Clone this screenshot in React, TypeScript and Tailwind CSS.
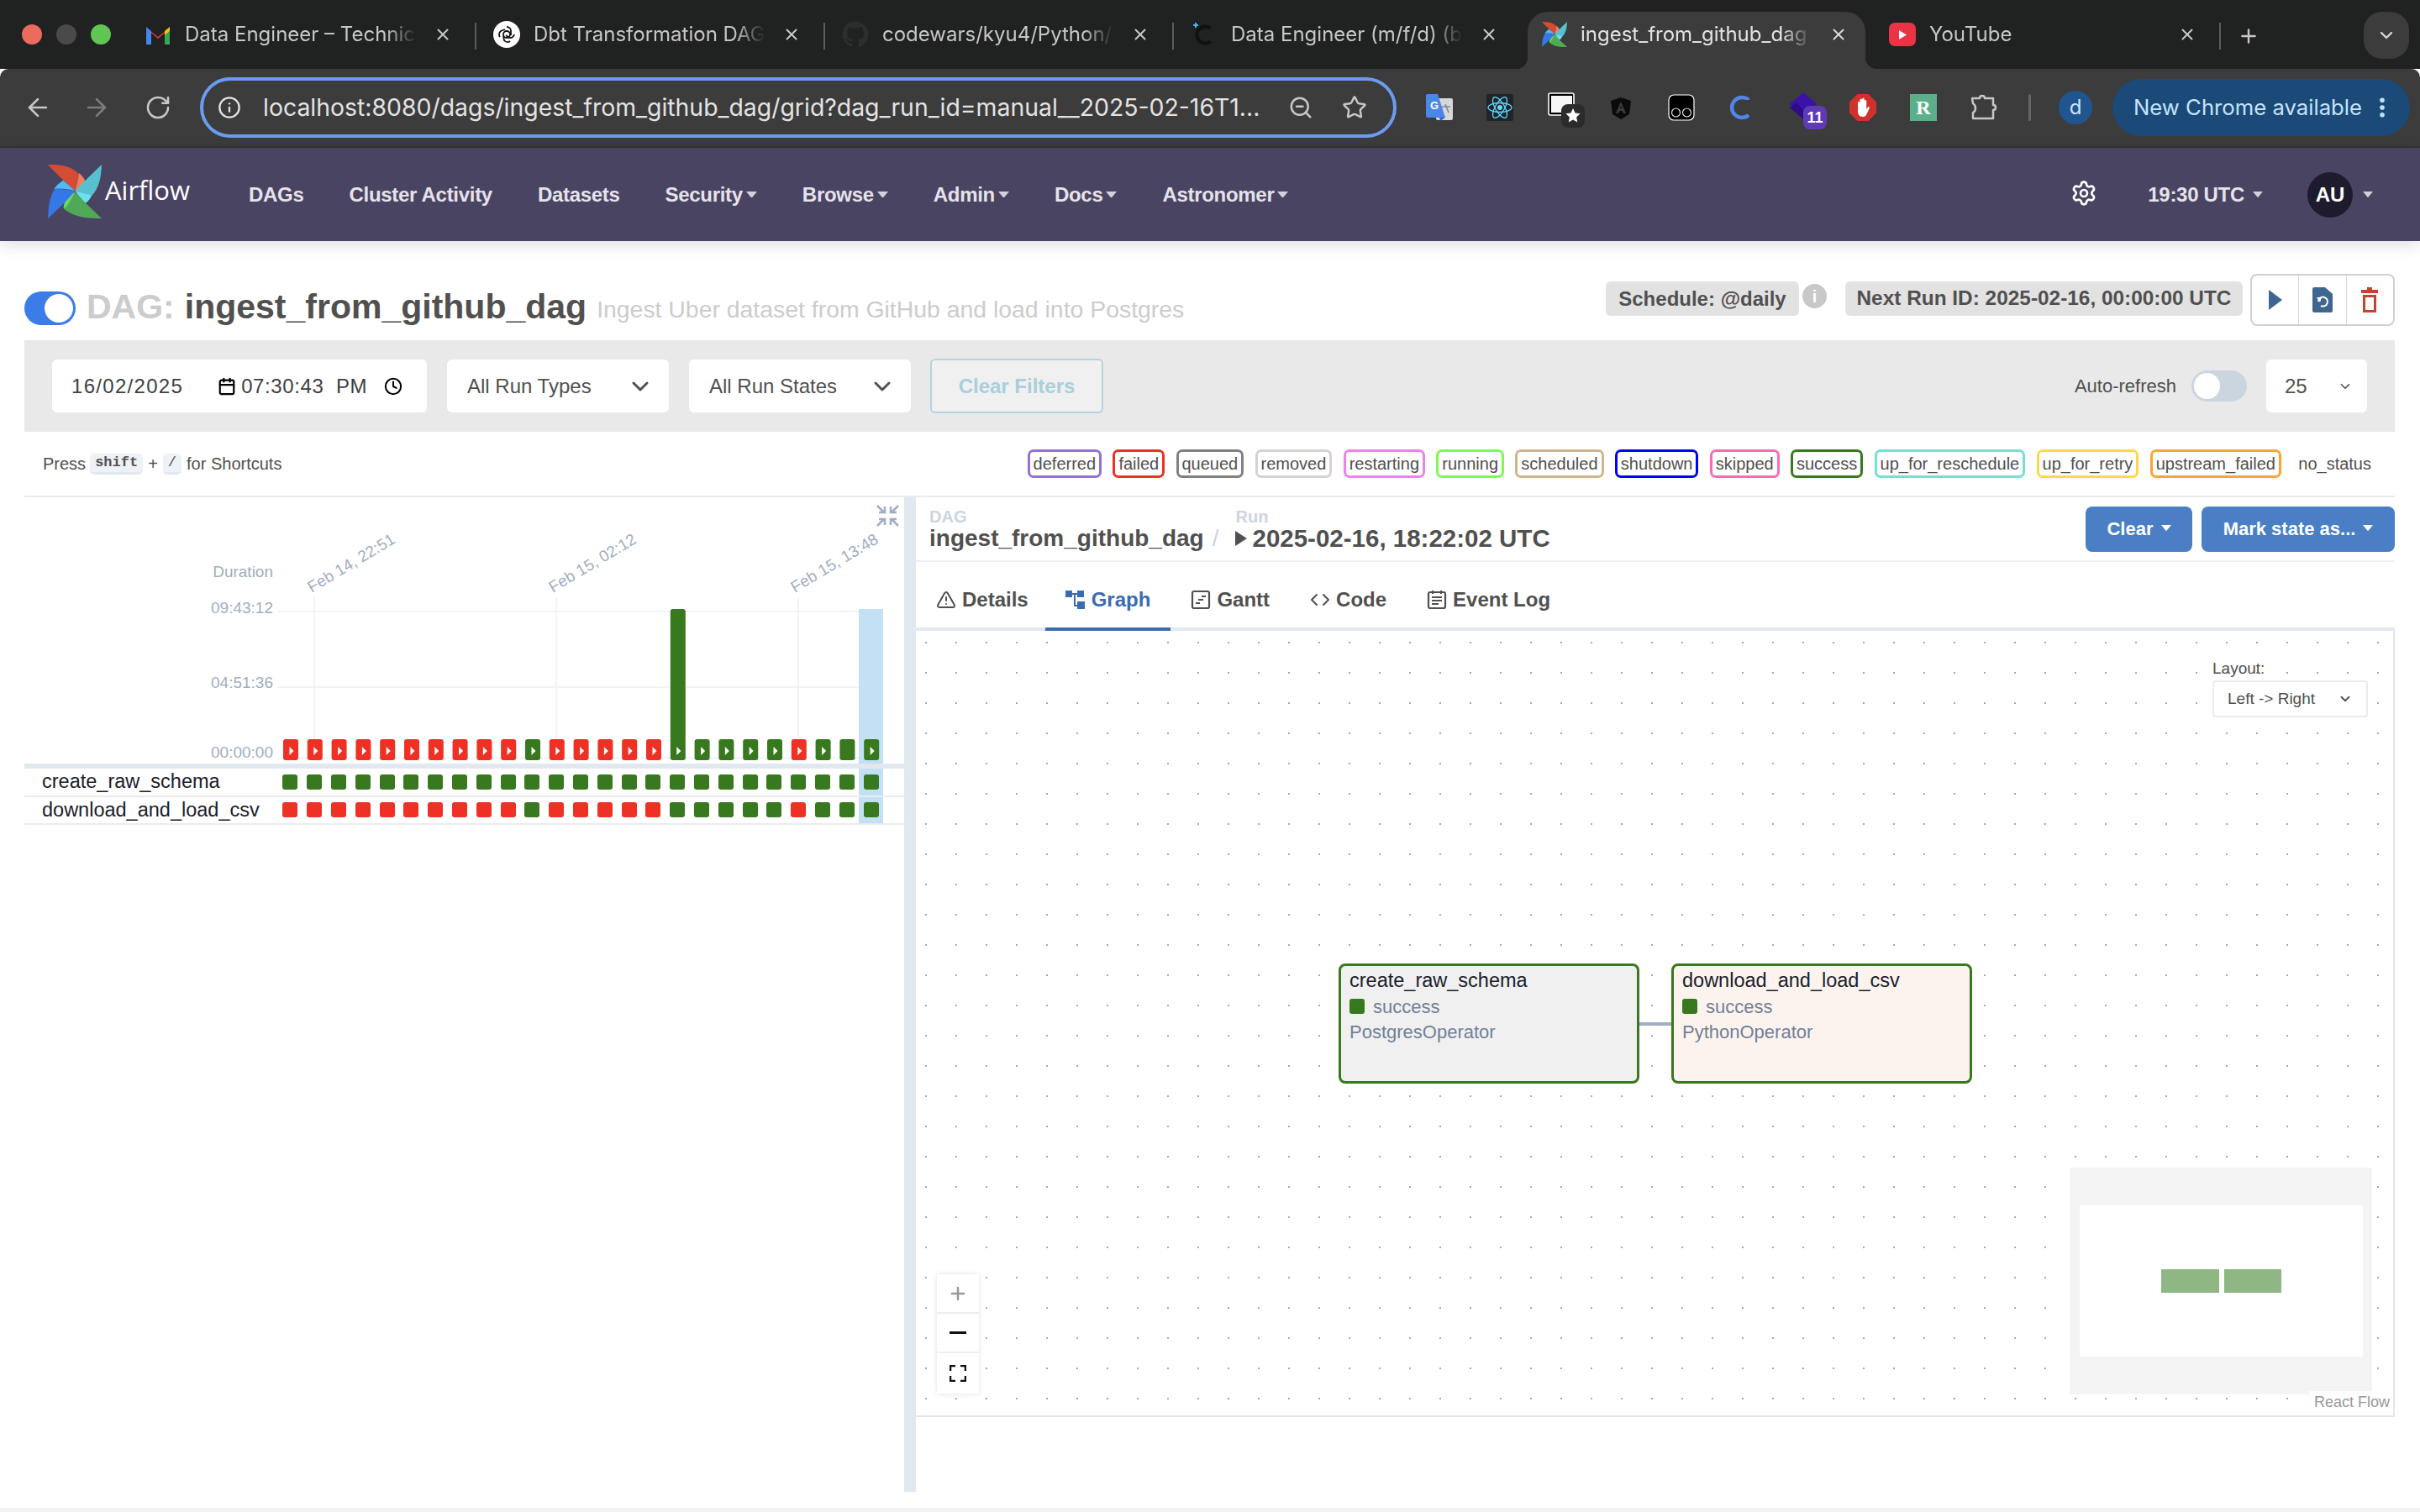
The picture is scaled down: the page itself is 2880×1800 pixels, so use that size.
import React from "react";
import { ArrowLeft, ArrowRight, RotateCw, Info, ZoomOut, Star, X, Plus, ChevronDown, EllipsisVertical, Settings, Calendar, Clock, TriangleAlert, Code } from "lucide-react";
import { FaGithub } from "react-icons/fa";

const Pinwheel = ({ size }: { size: number }) => (
  <svg viewBox="50 42 190 190" width={size} height={size} className="shrink-0">
    <path d="M50 42 C95 42 130 45 160 75 C155 100 150 120 146 135 C125 115 85 80 50 42Z" fill="#d34d34" />
    <path d="M160 72 C175 85 183 98 186 110 L146 135 C152 115 157 95 160 72Z" fill="#f08060" />
    <path d="M240 42 C238 90 230 125 205 152 L146 135 C175 105 205 75 240 42Z" fill="#57c1cf" />
    <path d="M146 135 L205 150 C198 165 192 172 182 178 C170 165 155 150 146 135Z" fill="#6be0ef" />
    <path d="M240 232 C190 232 140 228 106 198 L146 140 C175 170 205 200 240 232Z" fill="#4fa957" />
    <path d="M146 140 C125 145 108 165 105 195 C112 200 125 178 146 140Z" fill="#6bd66a" />
    <path d="M50 232 C52 185 58 150 76 126 L146 135 C118 170 85 200 50 232Z" fill="#3478e8" />
    <path d="M72 128 C85 110 95 105 104 98 C118 110 132 122 146 135 C120 128 95 125 72 128Z" fill="#4eb9fb" />
  </svg>
);

const Gmail = () => (
  <svg viewBox="0 0 32 28" width="32" height="28" className="shrink-0">
    <path d="M2 6 L16 17 L30 6 V24 H24 V12 L16 19 L8 12 V24 H2Z" fill="#ea4335" />
    <path d="M2 5 V26 H8 V10Z" fill="#4285f4" />
    <path d="M30 5 V26 H24 V10Z" fill="#34a853" />
    <path d="M24 10 L30 5 V10 L24 15Z" fill="#fbbc04" />
  </svg>
);

const Gpt = () => (
  <div className="w-[32px] h-[32px] rounded-full bg-white flex items-center justify-center shrink-0">
    <svg viewBox="0 0 24 24" width="24" height="24" fill="none" stroke="#111" strokeWidth="1.8">
      <circle cx="12" cy="12" r="4" />
      <path d="M12 3a5 5 0 0 1 5 5v5M21 12a5 5 0 0 1-6 4l-4-3M16 20a5 5 0 0 1-7-1l-1-5M4 15a5 5 0 0 1 1-7l5-2" />
    </svg>
  </div>
);

const Tab = ({ icon, title, sep = true }: { icon: React.ReactNode; title: string; sep?: boolean }) => (
  <>
    <div className="w-[413px] h-[68px] flex items-center pl-[20px] pb-[14px] shrink-0">
      <div className="w-[32px] flex justify-center shrink-0">{icon}</div>
      <div className="ml-[16px] w-[284px] whitespace-nowrap text-[24px] text-[#c7c7c7] [mask-image:linear-gradient(to_right,black_84%,transparent_97%)]">{title}</div>
      <X size={22} strokeWidth={2.2} className="ml-[12px] text-[#c7c7c7] shrink-0" />
    </div>
    {sep ? <div className="w-[2px] h-[32px] mb-[10px] bg-[#5b5c5c] shrink-0" /> : null}
  </>
);

const ChromeBar = () => (
  <div className="[font-family:Inter,sans-serif]">
    <div className="h-[82px] bg-[#202221] flex items-end">
      <div className="w-[152px] h-[82px] flex items-center pl-[26px] gap-[17px] shrink-0 pb-0">
        <div className="w-[24px] h-[24px] rounded-full bg-[#ec6a5e]" />
        <div className="w-[24px] h-[24px] rounded-full bg-[#4a4a4a]" />
        <div className="w-[24px] h-[24px] rounded-full bg-[#61c554]" />
      </div>
      <div className="flex items-center h-[68px]">
        <Tab icon={<Gmail />} title="Data Engineer – Technic" />
        <Tab icon={<Gpt />} title="Dbt Transformation DAG" />
        <Tab icon={<FaGithub size={32} color="#2c2e2e" />} title="codewars/kyu4/Python/s" />
        <Tab
          icon={
            <svg viewBox="0 0 32 32" width="32" height="32">
              <path d="M6 2v6M3 5h6" stroke="#4db6e8" strokeWidth="2" />
              <path d="M24 9a10 10 0 1 0 0 15" fill="none" stroke="#111" strokeWidth="4" />
            </svg>
          }
          title="Data Engineer (m/f/d) (b"
          sep={false}
        />
        <div className="w-[8px] shrink-0" />
        <div className="relative w-[402px] h-[68px] rounded-t-[24px] bg-[#3c3c3c] flex items-center pl-[17px] pb-[14px] shrink-0">
          <Pinwheel size={30} />
          <div className="ml-[16px] w-[284px] whitespace-nowrap text-[24px] text-[#e3e3e3] [mask-image:linear-gradient(to_right,black_84%,transparent_97%)]">ingest_from_github_dag</div>
          <X size={22} strokeWidth={2.2} className="ml-[12px] text-[#d8d8d8] shrink-0" />
          <div className="absolute left-[-14px] bottom-0 w-[14px] h-[14px] bg-[radial-gradient(circle_at_0_0,#202221_14px,#3c3c3c_14.5px)]" />
          <div className="absolute right-[-14px] bottom-0 w-[14px] h-[14px] bg-[radial-gradient(circle_at_100%_0,#202221_14px,#3c3c3c_14.5px)]" />
        </div>
        <div className="w-[8px] shrink-0" />
        <Tab
          icon={
            <div className="w-[32px] h-[28px] rounded-[7px] bg-[#ea3344] flex items-center justify-center">
              <svg viewBox="0 0 10 12" width="9" height="11"><path d="M0 0 L10 6 L0 12Z" fill="#fff" /></svg>
            </div>
          }
          title="YouTube"
        />
        <Plus size={26} strokeWidth={2.2} className="ml-[20px] mb-[10px] text-[#c7c7c7] shrink-0" />
        <div className="ml-[124px] w-[54px] h-[56px] rounded-[22px] bg-[#3c3c3c] flex items-center justify-center self-start shrink-0">
          <ChevronDown size={24} strokeWidth={2.4} className="text-[#d8d8d8]" />
        </div>
      </div>
    </div>
    <div className="h-[94px] bg-[#3c3c3c] border-b-2 border-[#333333] rounded-t-[10px] flex items-center pl-[28px]">
      <ArrowLeft size={34} strokeWidth={1.9} className="text-[#c7c7c7] shrink-0" />
      <ArrowRight size={34} strokeWidth={1.9} className="ml-[36px] text-[#7d7d7d] shrink-0" />
      <RotateCw size={32} strokeWidth={1.9} className="ml-[40px] text-[#c7c7c7] shrink-0" />
      <div className="ml-[34px] w-[1424px] h-[72px] rounded-full border-[4px] border-[#6c9bef] flex items-center pl-[17px] pr-[31px] shrink-0">
        <Info size={28} strokeWidth={2} className="text-[#e3e3e3] shrink-0" />
        <div className="ml-[26px] flex-1 whitespace-nowrap text-[28.4px] text-[#e3e3e3]">localhost:8080/dags/ingest_from_github_dag/grid?dag_run_id=manual__2025-02-16T1...</div>
        <ZoomOut size={30} strokeWidth={2} className="ml-[20px] text-[#c7c7c7] shrink-0" />
        <Star size={30} strokeWidth={2} className="ml-[34px] text-[#c7c7c7] shrink-0" />
      </div>
      <div className="ml-[15px] flex items-center shrink-0">
        <div className="w-[72px] flex justify-center">
          <svg viewBox="0 0 32 32" width="32" height="32">
            <rect x="12" y="5" width="20" height="26" rx="2" fill="#d8d8d8" />
            <path d="M23 12l4 10M19 15h10" stroke="#7f8c8d" strokeWidth="1.6" fill="none" />
            <path d="M0 2 a2 2 0 0 1 2-2 H14 L23 28 H2 a2 2 0 0 1-2-2Z" fill="#4a86e8" />
            <path d="M16 28 L23 28 L17 32Z" fill="#3b5fc0" />
            <text x="5" y="18" fontSize="13" fontWeight="700" fill="#fff" fontFamily="Liberation Sans">G</text>
          </svg>
        </div>
        <div className="w-[72px] flex justify-center">
          <svg viewBox="0 0 32 32" width="32" height="32">
            <rect width="32" height="32" rx="2" fill="#20232a" />
            <g fill="none" stroke="#61dafb" strokeWidth="1.3">
              <ellipse cx="16" cy="16" rx="14" ry="5.5" />
              <ellipse cx="16" cy="16" rx="14" ry="5.5" transform="rotate(60 16 16)" />
              <ellipse cx="16" cy="16" rx="14" ry="5.5" transform="rotate(120 16 16)" />
            </g>
            <circle cx="16" cy="16" r="3" fill="#61dafb" />
          </svg>
        </div>
        <div className="w-[72px] flex justify-center relative">
          <svg viewBox="0 0 44 44" width="44" height="44" className="ml-[14px] mt-[4px] mb-[-4px]">
            <rect x="1" y="1" width="30" height="26" rx="2" fill="#000" stroke="#fff" strokeWidth="1.6" />
            <rect x="4" y="4" width="25" height="20" fill="#f6f6f6" />
            <rect x="16" y="14" width="28" height="28" rx="8" fill="#2b2b2b" />
            <path d="M30 19l2.6 5.6 6 .7-4.5 4.1 1.2 6-5.3-3-5.3 3 1.2-6-4.500-4.100 6-.7z" fill="#fff" />
          </svg>
        </div>
        <div className="w-[72px] flex justify-center">
          <svg viewBox="0 0 32 32" width="32" height="32">
            <path fillRule="evenodd" d="M16 4 L28 8 L26 24 L16 30 L6 24 L4 8Z M16 9 L10 23 H13 L14.300 20 H17.700 L19 23 H22Z M16 13.500 L17 17 H15Z" fill="#0b0b0b" />
          </svg>
        </div>
        <div className="w-[72px] flex justify-center">
          <svg viewBox="0 0 32 32" width="32" height="32">
            <rect x="1" y="1" width="30" height="30" rx="6" fill="#000" stroke="#fff" strokeWidth="1.2" />
            <circle cx="9.500" cy="22" r="5" fill="none" stroke="#ddd" strokeWidth="1.2" />
            <circle cx="22.500" cy="22" r="5" fill="none" stroke="#ddd" strokeWidth="1.2" />
          </svg>
        </div>
        <div className="w-[72px] flex justify-center">
          <svg viewBox="0 0 32 32" width="32" height="32">
            <path d="M24 7a12 12 0 1 0 0 18" fill="none" stroke="#4f86e8" strokeWidth="4.500" />
            <path d="M26 10a8 8 0 0 0-11 12" fill="none" stroke="#3c3c3c" strokeWidth="2" />
          </svg>
        </div>
        <div className="w-[72px] flex justify-center">
          <svg viewBox="0 0 44 44" width="44" height="44" className="ml-[14px] mt-[4px] mb-[-4px]">
            <path d="M16 0 L32 14 L16 28 L0 14Z" fill="#3a12a8" />
            <path d="M0 18 L16 32 L22 28 L8 12Z" fill="#2c0d85" />
            <rect x="16" y="16" width="28" height="28" rx="8" fill="#5e3bb5" />
            <text x="30" y="36" fontSize="18" fontWeight="700" textAnchor="middle" fill="#fff" fontFamily="Liberation Sans">11</text>
          </svg>
        </div>
        <div className="w-[72px] flex justify-center">
          <svg viewBox="0 0 32 32" width="32" height="32">
            <path d="M9.500 0h13L32 9.500v13L22.500 32h-13L0 22.500v-13Z" fill="#d0312d" />
            <path d="M10 17V10a1.300 1.300 0 0 1 2.500 0V7a1.300 1.300 0 0 1 2.600 0v-1a1.300 1.300 0 0 1 2.600 0v2a1.300 1.300 0 0 1 2.500 0v10l1.800-2.500c1-1 2.500 0 1.700 1.300L20 25c-1 1.500-2.500 2-4.500 2C12 27 10 24 10 21Z" fill="#fff" />
          </svg>
        </div>
        <div className="w-[72px] flex justify-center">
          <div className="w-[32px] h-[32px] bg-[#5bb08a] flex items-center justify-center text-white font-bold text-[24px] [font-family:'Liberation_Serif',serif]">R</div>
        </div>
        <div className="w-[72px] flex justify-center">
          <svg viewBox="0 0 32 32" width="32" height="32" fill="none" stroke="#c7c7c7" strokeWidth="2.500" strokeLinejoin="round">
            <path d="M2 5 H11 C11 1 17 1 17 5 H27 V13 C31 13 31 19 27 19 V29 H3 V22 C7 20 7 14 3 11Z" />
          </svg>
        </div>
        <div className="w-[3px] h-[32px] rounded bg-[#656565] ml-[17px]" />
        <div className="ml-[33px] w-[40px] h-[40px] rounded-full bg-[#20558f] flex items-center justify-center text-[24px] text-[#cfe6ff]">d</div>
        <div className="ml-[24px] w-[354px] h-[68px] rounded-full bg-[#1c4a78] flex items-center pl-[25px] text-[25.7px] text-[#c2e4ff] whitespace-nowrap">
          New Chrome available
          <EllipsisVertical size={30} strokeWidth={2.500} className="ml-[9px] text-[#c2e4ff] shrink-0" />
        </div>
      </div>
    </div>
  </div>
);

const Caret = ({ c = "#d6d0de", w = 13 }: { c?: string; w?: number }) => (
  <svg viewBox="0 0 10 6" width={w} height={(w * 6) / 10} className="shrink-0">
    <path d="M0 0 L10 0 L5 6Z" fill={c} />
  </svg>
);

const NavItem = ({ label, caret }: { label: string; caret?: boolean }) => (
  <div className="flex items-center gap-[4px] text-[24px] font-bold tracking-[-0.3px] text-[#e6e2ea] whitespace-nowrap">
    {label}
    {caret ? <Caret /> : null}
  </div>
);

const NavBar = () => (
  <div className="relative z-10 h-[111px] bg-[#4a4463] shadow-[0_4px_18px_rgba(0,0,0,0.14)] flex items-center pl-[57px] shrink-0">
    <div className="flex items-center mt-[-8px] shrink-0">
      <Pinwheel size={64} />
      <span className="ml-[4px] text-[31px] text-white [font-family:'Open_Sans',sans-serif] mt-[-2px]">Airflow</span>
    </div>
    <div className="ml-[70px] flex items-center gap-[54px]">
      <NavItem label="DAGs" />
      <NavItem label="Cluster Activity" />
      <NavItem label="Datasets" />
      <NavItem label="Security" caret />
      <NavItem label="Browse" caret />
      <NavItem label="Admin" caret />
      <NavItem label="Docs" caret />
      <NavItem label="Astronomer" caret />
    </div>
    <div className="ml-auto flex items-center pr-[56px]">
      <Settings size={32} strokeWidth={2} className="text-white mt-[-4px]" />
      <span className="ml-[60px] text-[24px] font-bold tracking-[-0.3px] text-[#e6e2ea] whitespace-nowrap">19:30 UTC</span>
      <span className="ml-[10px]"><Caret w={12} /></span>
      <div className="ml-[53px] w-[54px] h-[54px] rounded-full bg-[#1e1b2e] flex items-center justify-center text-white font-bold text-[24px]">AU</div>
      <span className="ml-[12px]"><Caret w={12} /></span>
    </div>
  </div>
);

const TitleRow = () => (
  <div className="h-[79px] flex items-start shrink-0">
    <div className="mt-[21px] w-[61px] h-[40px] rounded-full bg-[#3b7ce8] flex items-center justify-end pr-[3px] shrink-0">
      <div className="w-[34px] h-[34px] rounded-full bg-white" />
    </div>
    <div className="ml-[13px] mt-[12px] text-[41px] leading-[54px] font-bold text-[#cccccc] whitespace-nowrap">DAG:</div>
    <div className="ml-[12px] mt-[12px] text-[41px] leading-[54px] font-bold text-[#51504f] whitespace-nowrap">ingest_from_github_dag</div>
    <div className="ml-[12px] mt-[22px] text-[28.4px] leading-[40px] text-[#cccccc] whitespace-nowrap">Ingest Uber dataset from GitHub and load into Postgres</div>
    <div className="ml-auto flex items-start">
      <div className="mt-[9px] h-[41px] w-[230px] rounded-[6px] bg-[#e2e2e2] flex items-center justify-center text-[24px] font-bold text-[#51504f] whitespace-nowrap">Schedule: @daily</div>
      <div className="ml-[4px] mt-[12px] w-[29px] h-[29px] rounded-full bg-[#c8c8c8] flex items-center justify-center text-white font-bold text-[20px]">i</div>
      <div className="ml-[22px] mt-[9px] h-[41px] w-[473px] rounded-[6px] bg-[#e2e2e2] flex items-center justify-center text-[24.4px] font-bold text-[#51504f] whitespace-nowrap">Next Run ID: 2025-02-16, 00:00:00 UTC</div>
      <div className="ml-[9px] w-[172px] h-[62px] rounded-[8px] border-2 border-[#d0d0d0] flex">
        <div className="flex-1 flex items-center justify-center border-r border-[#d8d8d8]">
          <svg viewBox="0 0 16 24" width="16" height="24"><path d="M0 0 L16 12 L0 24Z" fill="#3f6690" /></svg>
        </div>
        <div className="flex-1 flex items-center justify-center border-r border-[#d8d8d8]">
          <svg viewBox="0 0 24 30" width="24" height="30">
            <path d="M2 0 H15 L24 8 V28 a2 2 0 0 1-2 2 H2 a2 2 0 0 1-2-2 V2 a2 2 0 0 1 2-2Z" fill="#3f6690" />
            <path d="M7 17 a5.500 5.500 0 1 1 3 5" fill="none" stroke="#fff" strokeWidth="2" />
            <path d="M5 12 H11 L9 18Z" fill="#fff" />
          </svg>
        </div>
        <div className="flex-1 flex items-center justify-center">
          <svg viewBox="0 0 20 30" width="20" height="30">
            <path d="M7 0 H13 V3 H20 V7 H0 V3 H7Z" fill="#c9402f" />
            <path d="M2 9 H18 V30 H2Z M5 12 V27 H15 V12Z" fill="#c9402f" fillRule="evenodd" />
          </svg>
        </div>
      </div>
    </div>
  </div>
);

const FilterBar = () => (
  <div className="h-[109px] bg-[#e9e9e9] flex items-center pl-[33px] pr-[33px] text-[#51504f] shrink-0">
    <div className="w-[446px] h-[63px] bg-white rounded-[6px] flex items-center pl-[23px] text-[24px] tracking-[1.3px] whitespace-nowrap text-[#3f3f3f]">
      16/02/2025
      <Calendar size={22} strokeWidth={2.400} className="ml-[41px] text-black shrink-0" />
      <span className="ml-[6px] tracking-[0.6px]">07:30:43&nbsp; PM</span>
      <Clock size={22} strokeWidth={2.200} className="ml-[20px] text-black shrink-0" />
    </div>
    <div className="ml-[24px] w-[264px] h-[63px] bg-white rounded-[6px] flex items-center justify-between pl-[24px] pr-[18px] text-[24px] whitespace-nowrap">
      All Run Types
      <ChevronDown size={32} strokeWidth={2.200} />
    </div>
    <div className="ml-[24px] w-[264px] h-[63px] bg-white rounded-[6px] flex items-center justify-between pl-[24px] pr-[18px] text-[24px] whitespace-nowrap">
      All Run States
      <ChevronDown size={32} strokeWidth={2.200} />
    </div>
    <div className="ml-[23px] w-[206px] h-[65px] bg-[#f0f0f0] border-2 border-[#b4d3dd] rounded-[6px] flex items-center justify-center text-[24px] font-bold text-[#a8cfdb] whitespace-nowrap">Clear Filters</div>
    <div className="ml-auto text-[22px] whitespace-nowrap">Auto-refresh</div>
    <div className="ml-[18px] w-[66px] h-[37px] rounded-full bg-[#cbd5e0] flex items-center pl-[3px]">
      <div className="w-[31px] h-[31px] rounded-full bg-white" />
    </div>
    <div className="ml-[23px] w-[120px] h-[63px] bg-white rounded-[6px] flex items-center justify-between pl-[22px] pr-[17px] text-[24px]">
      25
      <ChevronDown size={18} strokeWidth={2.200} />
    </div>
  </div>
);

const chips: [string, string][] = [
  ["deferred", "#9370db"],
  ["failed", "#ee3124"],
  ["queued", "#808080"],
  ["removed", "#d3d3d3"],
  ["restarting", "#ee82ee"],
  ["running", "#7cfc4c"],
  ["scheduled", "#d2b48c"],
  ["shutdown", "#0000ff"],
  ["skipped", "#ff69b4"],
  ["success", "#38781f"],
  ["up_for_reschedule", "#75dfd0"],
  ["up_for_retry", "#ffd84a"],
  ["upstream_failed", "#f7a533"],
];

const LegendRow = () => (
  <div className="h-[78px] flex items-center pl-[22px] border-b-2 border-[#e8ebf0] text-[20px] text-[#51504f] shrink-0">
    <span>Press</span>
    <span className="ml-[5px] px-[6px] h-[25px] flex items-center rounded-[5px] bg-[#edf2f7] border-b-[3px] border-[#e2e8f0] text-[17px] font-bold [font-family:'Liberation_Mono',monospace]">shift</span>
    <span className="mx-[6px]">+</span>
    <span className="px-[6px] h-[25px] flex items-center rounded-[5px] bg-[#edf2f7] border-b-[3px] border-[#e2e8f0] text-[17px] [font-family:'Liberation_Mono',monospace]">/</span>
    <span className="ml-[6px]">for Shortcuts</span>
    <div className="ml-auto flex items-center gap-[13.3px] pr-[28px]">
      {chips.map(([n, c]) => (
        <span key={n} className="h-[34px] px-[4px] rounded-[7px] border-[3px] flex items-center whitespace-nowrap" style={{ borderColor: c }}>{n}</span>
      ))}
      <span className="ml-[7px] whitespace-nowrap">no_status</span>
    </div>
  </div>
);

const GREEN = "#38781f";
const RED = "#ee3124";
const states = [0,0,0,0,0,0,0,0,0,0,1,0,0,0,0,0,1,1,1,1,1,0,1,1,1];

const Chart = () => (
  <svg width="1047" height="317" className="block [font-family:'Liberation_Sans',sans-serif]">
    <g stroke="#edf0f4" strokeWidth="1.500">
      <line x1="302" x2="1022" y1="136" y2="136" />
      <line x1="302" x2="1022" y1="226" y2="226" />
      <line x1="302" x2="1022" y1="310" y2="310" />
      <line x1="345" x2="345" y1="119" y2="313" />
      <line x1="633" x2="633" y1="119" y2="313" />
      <line x1="921" x2="921" y1="119" y2="313" />
    </g>
    <g fill="#a0aec0" fontSize="19">
      <text x="296" y="95" textAnchor="end">Duration</text>
      <text x="296" y="138" textAnchor="end">09:43:12</text>
      <text x="296" y="227" textAnchor="end">04:51:36</text>
      <text x="296" y="310" textAnchor="end">00:00:00</text>
      <text x="0" y="0" transform="translate(342 114) rotate(-31)">Feb 14, 22:51</text>
      <text x="0" y="0" transform="translate(629 114) rotate(-31)">Feb 15, 02:12</text>
      <text x="0" y="0" transform="translate(917 114) rotate(-31)">Feb 15, 13:48</text>
    </g>
    <rect x="993" y="133" width="29" height="184" fill="#c4e0f5" />
    {states.map((s, i) => {
      const x = 308 + i * 28.8;
      const tall = i === 16;
      return (
        <g key={i}>
          <rect x={x} y={tall ? 133 : 288} width="18" height={tall ? 180 : 25} rx="3" fill={s ? GREEN : RED} />
          {i !== 23 ? <path d={`M${x + 7.5} 297 L${x + 12.5} 302 L${x + 7.5} 307Z`} fill="#fff" /> : null}
        </g>
      );
    })}
    <g stroke="#a0aec0" strokeWidth="2.500" fill="none" transform="translate(1014 9)">
      <path d="M1 1 L9 9 M3 9 H10 V2" />
      <path d="M26 1 L18 9 M24 9 H17 V2" />
      <path d="M1 25 L9 17 M3 17 H10 V24" />
      <path d="M26 25 L18 17 M24 17 H17 V24" />
    </g>
  </svg>
);

const GridRow = ({ label, colors }: { label: string; colors: string[] }) => (
  <div className="h-[33.5px] flex items-stretch border-b-2 border-[#e8ebf0]">
    <div className="w-[302px] pl-[21px] flex items-center text-[23.5px] text-[#1a202c] whitespace-nowrap">{label}</div>
    <div className="flex">
      {colors.map((c, i) => (
        <div key={i} className={`w-[28.8px] flex items-center justify-center ${i === 24 ? "bg-[#c4e0f5]" : ""}`}>
          <div className="w-[18px] h-[18px] rounded-[3px]" style={{ background: c }} />
        </div>
      ))}
    </div>
  </div>
);

const LeftPanel = () => (
  <div className="w-[1047px] shrink-0">
    <Chart />
    <div className="h-[6px] bg-[#e2e8f0]" />
    <GridRow label="create_raw_schema" colors={states.map(() => GREEN)} />
    <GridRow label="download_and_load_csv" colors={states.map((s) => (s ? GREEN : RED))} />
  </div>
);

const TabItem = ({ icon, label, active, extra = "" }: { icon: React.ReactNode; label: string; active?: boolean; extra?: string }) => (
  <div className={`h-[82px] px-[24px] pt-[12px] flex items-center gap-[7px] text-[24px] font-bold border-b-4 whitespace-nowrap ${extra} ${active ? "border-[#3b6cb0] text-[#3b6cb0]" : "border-transparent text-[#51504f]"}`}>
    {icon}
    {label}
  </div>
);

const NodeBox = ({ name, op, bg, left }: { name: string; op: string; bg: string; left: string }) => (
  <div className={`absolute top-[396px] ${left} w-[358px] h-[143px] rounded-[8px] border-[3px] border-[#38781f] pl-[10px] pt-[2px] ${bg}`}>
    <div className="text-[23.5px] leading-[30px] text-[#1a202c]">{name}</div>
    <div className="flex items-center mt-[1px] h-[30px]">
      <div className="w-[18px] h-[18px] rounded-[3px] bg-[#38781f]" />
      <span className="ml-[10px] text-[22px] text-[#718096]">success</span>
    </div>
    <div className="text-[22px] leading-[30px] mt-[1px] text-[#718096]">{op}</div>
  </div>
);

const RightPanel = () => (
  <div className="flex-1 min-w-0">
    <div className="h-[77px] border-b-2 border-[#edf0f4] flex items-start pl-[16px]">
      <div className="mt-[13px]">
        <div className="text-[20px] leading-[20px] font-bold text-[#cbd5e0]">DAG</div>
        <div className="text-[28px] leading-[32px] font-bold text-[#51504f] whitespace-nowrap">ingest_from_github_dag</div>
      </div>
      <div className="ml-[10px] mt-[33px] text-[28px] leading-[32px] text-[#cbd5e0]">/</div>
      <div className="ml-[20px] mt-[13px]">
        <div className="text-[20px] leading-[20px] font-bold text-[#cbd5e0]">Run</div>
        <div className="flex items-center text-[29.5px] leading-[32px] font-bold text-[#51504f] whitespace-nowrap">
          <svg viewBox="0 0 14 18" width="14" height="18" className="mr-[6px]"><path d="M0 0 L14 9 L0 18Z" fill="#51504f" /></svg>
          2025-02-16, 18:22:02 UTC
        </div>
      </div>
      <div className="ml-auto mt-[11px] flex gap-[11px]">
        <div className="w-[127px] h-[54px] rounded-[8px] bg-[#4a7fc5] flex items-center justify-center gap-[9px] pb-[2px] text-white font-bold text-[22px]">Clear <Caret c="#fff" w={12} /></div>
        <div className="w-[230px] h-[54px] rounded-[8px] bg-[#4a7fc5] flex items-center justify-center gap-[9px] pb-[2px] text-white font-bold text-[22px]">Mark state as... <Caret c="#fff" w={12} /></div>
      </div>
    </div>
    <div className="flex border-b-4 border-[#e2e8f0] h-[82px] items-start">
      <TabItem extra="mr-[-4px]" icon={<TriangleAlert size={24} strokeWidth={2} />} label="Details" />
      <TabItem
        active
        icon={
          <svg viewBox="0 0 24 24" width="24" height="24" fill="#3b6cb0">
            <rect x="0" y="1" width="8" height="8" />
            <rect x="14" y="1" width="8" height="8" />
            <rect x="14" y="14" width="9" height="9" />
            <path d="M8 4 H14 V6 H12 V18 H14 V20 H10 V6 H8Z" />
          </svg>
        }
        label="Graph"
      />
      <TabItem
        icon={
          <svg viewBox="0 0 24 24" width="24" height="24" fill="none" stroke="#51504f" strokeWidth="2.200">
            <rect x="2" y="2" width="20" height="20" rx="2" />
            <path d="M13 8 H18 M9 12 H15 M6 16 H11" />
          </svg>
        }
        label="Gantt"
      />
      <TabItem icon={<Code size={24} strokeWidth={2} className="text-[#51504f]" />} label="Code" />
      <TabItem
        icon={
          <svg viewBox="0 0 24 24" width="24" height="24" fill="none" stroke="#51504f" strokeWidth="2.200">
            <rect x="2" y="3" width="20" height="19" rx="2" />
            <path d="M7 1 V5 M17 1 V5 M6 9 H18 M6 13 H18 M6 17 H14" />
          </svg>
        }
        label="Event Log"
      />
    </div>
    <div className="relative h-[936px] border-b-2 border-r-2 border-[#e5e5e5] overflow-hidden bg-[radial-gradient(circle,#a8a8ae_1.1px,transparent_1.2px)] bg-[size:36px_36px] bg-[position:-6px_-4px]">
      <div className="absolute left-[1543px] top-[33px] w-[185px]">
        <div className="text-[19px] leading-[24px] text-[#51504f]">Layout:</div>
        <div className="mt-[2px] h-[44px] bg-white border-2 border-[#e8ebf0] rounded-[4px] flex items-center justify-between pl-[16px] pr-[16px] text-[19px] text-[#51504f]">
          Left -&gt; Right
          <ChevronDown size={18} strokeWidth={2.400} />
        </div>
      </div>
      <NodeBox name="create_raw_schema" op="PostgresOperator" bg="bg-[#f0f0f0]" left="left-[503px]" />
      <NodeBox name="download_and_load_csv" op="PythonOperator" bg="bg-[#fdf3ee]" left="left-[899px]" />
      <div className="absolute left-[861px] top-[466px] w-[38px] h-[4px] bg-[#a0aec0]" />
      <div className="absolute left-[25px] top-[766px] w-[50px] h-[142px] bg-white shadow-[0_0_6px_rgba(0,0,0,0.12)] flex flex-col">
        <div className="h-[47px] border-b-2 border-[#eeeeee] flex items-center justify-center"><Plus size={24} strokeWidth={2.500} className="text-[#999999]" /></div>
        <div className="h-[47px] border-b-2 border-[#eeeeee] flex items-center justify-center"><div className="w-[20px] h-[3px] bg-[#111]" /></div>
        <div className="flex-1 flex items-center justify-center">
          <svg viewBox="0 0 20 20" width="20" height="20" fill="none" stroke="#111" strokeWidth="2.500">
            <path d="M1 7 V1 H7 M13 1 H19 V7 M19 13 V19 H13 M7 19 H1 V13" />
          </svg>
        </div>
      </div>
      <div className="absolute left-[1373px] top-[639px] w-[360px] h-[270px] bg-[#f4f4f4] flex items-center justify-center">
        <div className="w-[337px] h-[180px] bg-white flex items-center justify-center gap-[6px]">
          <div className="w-[69px] h-[28px] bg-[#8fb784]" />
          <div className="w-[68px] h-[28px] bg-[#8fb784]" />
        </div>
      </div>
      <div className="absolute right-[4px] bottom-[4px] pl-[6px] pt-[1px] text-[18px] leading-[24px] bg-white/70 text-[#999999] whitespace-nowrap">React Flow</div>
    </div>
  </div>
);

export default function App() {
  return (
    <div className="w-[2880px] h-[1800px] overflow-hidden bg-white flex flex-col [font-family:'Liberation_Sans',Arial,sans-serif]">
      <ChromeBar />
      <NavBar />
      <div className="flex-1 pt-[39px] pl-[29px] pr-[30px] flex flex-col min-h-0">
        <TitleRow />
        <FilterBar />
        <LegendRow />
        <div className="flex h-[1184px] shrink-0">
          <LeftPanel />
          <div className="w-[14px] bg-[#e2e8f0] shrink-0" />
          <RightPanel />
        </div>
      </div>
      <div className="h-[5px] bg-[#f3f3f3] shrink-0" />
    </div>
  );
}
